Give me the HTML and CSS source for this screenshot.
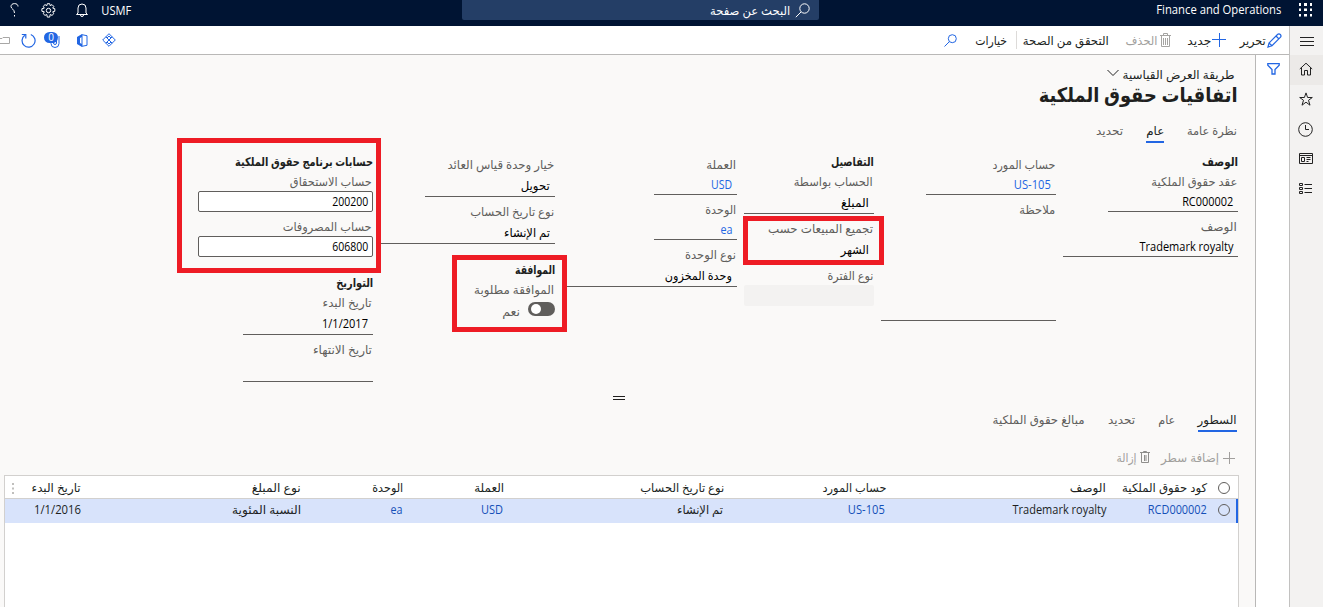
FILE: index.html
```
<!DOCTYPE html>
<html lang="ar" dir="rtl">
<head>
<meta charset="utf-8">
<title>Finance and Operations</title>
<link rel="stylesheet" href="styles.css">
</head>
<body>
<header class="top">
  <svg class="waffle" width="13" height="14" viewBox="0 0 13 14" fill="#fff"><path d="M0 0h2v3H0zM5 0h3v3H5zM11 0h2v3h-2zM0 5.500h2v2.500H0zM5 5.500h3v2.500H5zM11 5.500h2v2.500h-2zM0 11h2v2.500H0zM5 11h3v2.500H5zM11 11h2v2.500h-2z"/></svg>
  <span class="brand" data-w="125">Finance and Operations</span>
  <div class="search">
    <svg width="15" height="15" viewBox="0 0 15 15" fill="none" stroke="#fff"><circle cx="9.500" cy="5.500" r="4.700"/><path d="M6 9L.8 14.200"/></svg>
    <span data-w="80">البحث عن صفحة</span>
  </div>
  <div class="top-end">
    <span class="company" data-w="30">USMF</span>
    <svg class="bell" width="12" height="14" viewBox="0 0 12 14" fill="none" stroke="#fff"><path d="M2 10V5a4 4 0 0 1 8 0v5l1.500 1.500H.5zM4.500 12a1.500 1.500 0 0 0 3 0"/></svg>
    <svg class="gear" width="15" height="15" viewBox="0 0 15 15" fill="none" stroke="#fff"><circle cx="7.500" cy="7.500" r="2.200"/><path d="M6.300.7h2.400l.5 2 1.800-1.100 1.800 1.800-1.100 1.700 2.100.6v2.600l-2.100.5 1.100 1.900-1.800 1.700L9.200 11.500l-.5 2.600H6.300l-.5-2.600L4 12.400l-1.800-1.700 1.100-1.900L.9 8.300V5.700L3.300 5.100 2.200 3.400 4 1.600l1.800 1.100z"/></svg>
    <svg class="help" width="9" height="14" viewBox="0 0 9 14" fill="none" stroke="#fff"><path d="M8 3.500C8 1.500 6.500.6 4.500.6S1 1.600 1 3.500C1 6 4.500 6 4.500 10M4.500 12v1.500"/></svg>
  </div>
</header>

<div class="shell">
  <nav class="rail">
    <div class="rail-item menu"><svg width="14" height="10" viewBox="0 0 14 10" stroke="#222"><path d="M0 .5h14M0 4.500h14M0 8.500h14"/></svg></div>
    <div class="rail-item active"><svg width="14" height="14" viewBox="0 0 14 14" fill="none" stroke="#222"><path d="M.8 7L7 1.200 13.200 7M2.500 5.500v7.500h3V8.500h3V13h3V5.500"/></svg></div>
    <div class="rail-item"><svg width="14" height="14" viewBox="0 0 14 14" fill="none" stroke="#222"><path d="M7 .9l1.600 4.600h4.700L9.500 8.300l1.500 4.900-4-3-4 3 1.500-4.900L.7 5.500h4.700z"/></svg></div>
    <div class="rail-item"><svg width="15" height="15" viewBox="0 0 15 15" fill="none" stroke="#222"><circle cx="7.500" cy="7.500" r="6.800"/><path d="M7.500 3v4.500H11"/></svg></div>
    <div class="rail-item"><svg width="14" height="12" viewBox="0 0 14 12" fill="none" stroke="#222"><path d="M.5.5h13v10H.5zM.5 2.500h13M2.500 4.500h3v4h-3zM7.500 4.500h4M7.500 6.500h4M7.500 8.500h2"/></svg></div>
    <div class="rail-item"><svg width="14" height="12" viewBox="0 0 14 12" fill="none" stroke="#222"><path d="M.5.500h3v2h-3zM.5 4.500h3v2h-3zM.5 8.500h3v2h-3zM5.500 1.500H13M5.500 5.500H13M5.500 9.500H13"/></svg></div>
  </nav>

  <div class="work">
    <div class="toolbar">
      <svg class="i-edit" width="15" height="15" viewBox="0 0 15 15" fill="none" stroke="#2266e3" stroke-width="1.200"><path d="M1 14l1-4L10.500 1.500a1.600 1.600 0 0 1 2.800 2.800L5 12.700zM2 10l3 2.700M9 3l3 3"/></svg>
      <span data-w="26">تحرير</span>
      <svg class="i-new" width="14" height="14" viewBox="0 0 14 14" stroke="#2266e3" fill="none"><path d="M7.500 0v14M0 6.500h14"/></svg>
      <span data-w="24">جديد</span>
      <svg class="i-del" width="11" height="15" viewBox="0 0 11 15" fill="none" stroke="#a5a4a2"><path d="M0 2.500h11M3.500 2V.5h4V2M1.500 3v10.500h8V3M3.500 5v7M5.500 5v7M7.500 5v7"/></svg>
      <span class="off" data-w="32">الحذف</span>
      <span class="validate" data-w="86">التحقق من الصحة</span>
      <i class="bar"></i>
      <span class="options" data-w="32">خيارات</span>
      <svg class="i-find" width="13" height="13" viewBox="0 0 13 13" fill="none" stroke="#2266e3"><circle cx="8.300" cy="4.700" r="4"/><path d="M5.500 7.500L.5 12.500"/></svg>
      <div class="tools">
        <svg width="14" height="14" viewBox="0 0 14 14" fill="none" stroke="#2266e3"><path d="M7 .7L13.300 7 7 13.300.7 7zM7 3l2 2-2 2-2-2zM7 7l2 2-2 2-2-2zM3.800 3.800L7 7l3.200-3.200M3.800 10.200L5 9M10.200 10.200L9 9"/></svg>
        <svg width="11" height="13" viewBox="0 0 11 13"><path d="M5 .7l5 1v9.600l-5 1z" fill="none" stroke="#2266e3"/><path d="M0 3l5-3v3L3 4v5l2 1v3L0 10z" fill="#2266e3"/></svg>
        <div class="attach"><svg width="10" height="14" viewBox="0 0 10 14" fill="none" stroke="#2266e3"><path d="M1 5v4.500a4 4 0 0 0 8 0V2M3.500 3v6a1.500 1.500 0 0 0 3 0V2"/></svg><b>0</b></div>
        <svg width="15" height="15" viewBox="0 0 15 15" fill="none" stroke="#2266e3" stroke-width="1.200"><path d="M9.800 1.500a6.500 6.500 0 1 1-6 .8M.8 1.500h4v4"/></svg>
        <svg width="10" height="7" viewBox="0 0 10 7" fill="none" stroke="#a8a7a6"><path d="M0 1.500h2l1-1h6.500v6H0"/></svg>
      </div>
    </div>

    <div class="body">
      <aside class="filter"><svg width="13" height="12" viewBox="0 0 13 12" fill="none" stroke="#2266e3" stroke-width="1.300"><path d="M.8.700h11.400v1.500L8 6.500V11H5V6.500L.8 2.200z"/></svg></aside>
      <main class="main">
        <div class="view"><span data-w="112">طريقة العرض القياسية</span><svg width="12" height="8" viewBox="0 0 12 8" fill="none" stroke="#222"><path d="M.5 1L6 6.500 11.500 1"/></svg></div>
        <h1><span data-w="199">اتفاقيات حقوق الملكية</span></h1>
        <div class="tabs">
          <div class="tab"><span data-w="50">نظرة عامة</span></div>
          <div class="tab on"><span data-w="18">عام</span></div>
          <div class="tab"><span data-w="27">تحديد</span></div>
        </div>

        <section class="form">
          <div class="col">
            <h2><span data-w="36">الوصف</span></h2>
            <label><span data-w="86">عقد حقوق الملكية</span></label>
            <div class="val short"><span data-w="51">RC000002</span></div>
            <label><span data-w="36">الوصف</span></label>
            <div class="val"><span data-w="94">Trademark royalty</span></div>
          </div>
          <div class="col low">
            <label><span data-w="63">حساب المورد</span></label>
            <div class="val link short"><span data-w="37">US-105</span></div>
            <label><span data-w="36">ملاحظة</span></label>
            <div class="val memo"></div>
          </div>
          <div class="col narrow">
            <h2><span data-w="43">التفاصيل</span></h2>
            <label><span data-w="79">الحساب بواسطة</span></label>
            <div class="val combo"><span data-w="28">المبلغ</span></div>
            <label><span data-w="105">تجميع المبيعات حسب</span></label>
            <div class="val combo"><span data-w="28">الشهر</span></div>
            <label><span data-w="46">نوع الفترة</span></label>
            <div class="disabled"></div>
          </div>
          <div class="col low">
            <label><span data-w="30">العملة</span></label>
            <div class="val link tiny"><span data-w="21">USD</span></div>
            <label><span data-w="31">الوحدة</span></label>
            <div class="val link tiny"><span data-w="12">ea</span></div>
            <label><span data-w="51">نوع الوحدة</span></label>
            <div class="val combo"><span data-w="67">وحدة المخزون</span></div>
          </div>
          <div class="col low">
            <label><span data-w="107">خيار وحدة قياس العائد</span></label>
            <div class="val combo short"><span data-w="29">تحويل</span></div>
            <label><span data-w="84">نوع تاريخ الحساب</span></label>
            <div class="val combo"><span data-w="46">تم الإنشاء</span></div>
            <h2 class="gap-a"><span data-w="40">الموافقة</span></h2>
            <label><span data-w="80">الموافقة مطلوبة</span></label>
            <div class="switch"><i class="pill"></i><span data-w="18">نعم</span></div>
          </div>
          <div class="col">
            <h2><span data-w="138">حسابات برنامج حقوق الملكية</span></h2>
            <label><span data-w="82">حساب الاستحقاق</span></label>
            <div class="box"><span data-w="36">200200</span></div>
            <label><span data-w="89">حساب المصروفات</span></label>
            <div class="box"><span data-w="36">606800</span></div>
            <h2 class="gap-a"><span data-w="37">التواريخ</span></h2>
            <label><span data-w="49">تاريخ البدء</span></label>
            <div class="val combo short"><span data-w="46">1/1/2017</span></div>
            <label><span data-w="59">تاريخ الانتهاء</span></label>
            <div class="val combo short"></div>
          </div>
          <i class="mark mark-sales"></i>
          <i class="mark mark-approval"></i>
          <i class="mark mark-accounts"></i>
        </section>

        <div class="grip"><i></i></div>

        <div class="tabs lower">
          <div class="tab on"><span data-w="39">السطور</span></div>
          <div class="tab"><span data-w="17">عام</span></div>
          <div class="tab"><span data-w="27">تحديد</span></div>
          <div class="tab"><span data-w="92">مبالغ حقوق الملكية</span></div>
        </div>
        <div class="actions">
          <svg width="12" height="12" viewBox="0 0 12 12" stroke="#a19f9d"><path d="M6.500 0v12M0 6.500h12"/></svg>
          <span data-w="58">إضافة سطر</span>
          <svg class="i-remove" width="10" height="13" viewBox="0 0 10 13" fill="none" stroke="#8f8e8c"><path d="M0 1.500h10M3.500 1V.5h3V1M1.500 2v9.500h7V2M4.500 4v6M6 4v6"/></svg>
          <span data-w="20">إزالة</span>
        </div>
        <div class="grid">
          <div class="row head">
            <div class="c0"><i class="radio"></i></div>
            <div class="c1"><span data-w="85">كود حقوق الملكية</span></div>
            <div class="c2"><span data-w="36">الوصف</span></div>
            <div class="c3"><span data-w="64">حساب المورد</span></div>
            <div class="c4"><span data-w="84">نوع تاريخ الحساب</span></div>
            <div class="c5"><span data-w="30">العملة</span></div>
            <div class="c6"><span data-w="31">الوحدة</span></div>
            <div class="c7"><span data-w="49">نوع المبلغ</span></div>
            <div class="c8"><span data-w="49">تاريخ البدء</span></div>
            <svg class="dots" width="2" height="11" viewBox="0 0 2 11" fill="#c0bfbd"><path d="M0 0h2v2H0zM0 4.500h2v2H0zM0 9h2v2H0z"/></svg>
          </div>
          <div class="row sel">
            <div class="c0"><i class="radio"></i></div>
            <div class="c1 lk"><span data-w="59">RCD000002</span></div>
            <div class="c2"><span data-w="94">Trademark royalty</span></div>
            <div class="c3 lk"><span data-w="37">US-105</span></div>
            <div class="c4"><span data-w="46">تم الإنشاء</span></div>
            <div class="c5 lk"><span data-w="22">USD</span></div>
            <div class="c6 lk"><span data-w="12">ea</span></div>
            <div class="c7"><span data-w="69">النسبة المئوية</span></div>
            <div class="c8"><span data-w="47">1/1/2016</span></div>
          </div>
        </div>
      </main>
    </div>
  </div>
</div>
<script src="fit.js"></script>
</body>
</html>
```
FILE: styles.css
```
* { box-sizing: border-box; margin: 0; padding: 0; }
body {
  width: 1323px; height: 607px; overflow: hidden;
  font: 12px/20px "Open Sans", "DejaVu Sans", sans-serif;
  color: #201f1e; background: #faf9f8;
  display: flex; flex-direction: column;
}
svg { display: block; flex: none; }
span { white-space: nowrap; flex: none; }
[data-w] { display: inline-block; transform-origin: 100% 50%; }

.top { height: 26px; flex: none; background: #001433; color: #fff; display: flex; padding-right: 11px; position: relative; }
.waffle { margin-top: 3px; }
.brand { margin-right: 18px; }
.search { width: 357px; height: 20px; margin-right: 337px; background: #243e66; border-radius: 0 0 2px 2px; display: flex; padding: 0 9px; gap: 5px; line-height: 22px; }
.search svg { margin-top: 3px; }
.top-end { margin-right: auto; display: flex; padding-left: 10px; }
.company { margin-left: 13px; line-height: 22px; }
.bell { margin: 3px 0 0 20px; }
.gear { margin: 3px 0 0 22px; }
.help { margin-top: 3px; }

.shell { flex: 1; display: flex; min-height: 0; }
.rail { width: 34px; flex: none; background: #f3f2f1; border-left: 1px solid #c2c1c0; }
.rail-item { height: 30px; display: flex; align-items: center; justify-content: center; padding: 0 2px 2px 0; }
.rail-item.menu { height: 29px; padding: 3px 0 0; }
.rail-item.active { background: #eceae8; }
.work { flex: 1; display: flex; flex-direction: column; min-width: 0; }
.toolbar { height: 29px; flex: none; background: #fff; border-bottom: 1px solid #b9b8b7; display: flex; align-items: center; padding: 1px 7px 1px 0; }
.toolbar span { margin-top: 1px; }
.i-edit { margin-left: 1px; }
.i-new { margin: 0 14px 0 1px; }
.i-del { margin: 0 16px 0 3px; }
.off { color: #a19f9d; }
.validate { margin-right: 16px; }
.bar { width: 1px; height: 18px; background: #dddbd9; margin-right: 6px; }
.options { margin-right: 9px; }
.i-find { margin-right: 18px; }
.tools { margin-right: auto; display: flex; align-items: center; }
.tools > :nth-child(1) { margin-left: 14px; }
.tools > :nth-child(2) { margin-left: 17px; }
.tools > :nth-child(3) { margin-left: 8px; }
.tools > :nth-child(4) { margin-left: 11px; }
.attach { position: relative; width: 16px; height: 16px; padding-top: 2px; }
.attach b { position: absolute; left: 0; top: 0; width: 14px; height: 11px; border-radius: 6px; background: #2266e3; color: #fff; font: 10px/11px "Open Sans", sans-serif; text-align: center; }

.body { flex: 1; display: flex; min-height: 0; }
.filter { width: 34px; flex: none; background: #fff; border-left: 1px solid #b9b8b7; padding: 8px 9px 0 0; }
.main { flex: 1; min-width: 0; padding: 10px 17px 0 4px; display: flex; flex-direction: column; }
.view { height: 20px; display: flex; padding-right: 3px; gap: 4px; }
.view svg { margin-top: 4px; }
h1 { height: 20px; font-size: 20px; line-height: 20px; }
.tabs { display: flex; height: 22px; margin-top: 16px; gap: 23px; color: #605e5c; padding-right: 1px; }
.tab { height: 22px; border-bottom: 2px solid transparent; flex: none; }
.tab.on { color: #201f1e; border-color: #2266e3; }

.form { position: relative; height: 247px; flex: none; display: flex; gap: 7px; padding-top: 9px; color: #605e5c; }
.col { width: 175px; flex: none; display: flex; flex-direction: column; }
.col.narrow { width: 130px; }
.col.low { padding-top: 3px; }
h2 { height: 20px; font-size: 12px; line-height: 20px; color: #201f1e; flex: none; }
label { display: block; height: 20px; flex: none; padding-right: 1px; }
.val { height: 20px; flex: none; border-bottom: 1px solid #605e5c; color: #000; padding-right: 5px; margin-bottom: 5px; }
.val.short { width: 130px; }
.val.tiny { width: 83px; }
.val.combo { height: 22px; line-height: 22px; }
.val.memo { height: 101px; }
.val.link { color: #2266e3; }
.disabled { height: 21px; margin-top: -1px; background: #f3f2f1; border-radius: 2px; }
.gap-a { margin-top: 11px; }
.box { height: 21px; margin: -1px 0 5px; background: #fff; border: 1px solid #605e5c; border-radius: 2px; color: #000; padding-right: 4px; line-height: 20px; }
.switch { display: flex; gap: 8px; height: 20px; line-height: 24px; }
.pill { width: 27px; height: 14px; margin-top: 2px; border-radius: 7px; background: #605e5c; padding: 2px 3px; display: flex; justify-content: flex-end; }
.pill::before { content: ""; width: 10px; height: 10px; border-radius: 50%; background: #fff; }
.mark { position: absolute; border: 5px solid #ee1c25; }
.mark-sales { left: 739px; top: 73px; width: 141px; height: 49px; }
.mark-approval { left: 448px; top: 112px; width: 115px; height: 77px; }
.mark-accounts { left: 173px; top: -5px; width: 204px; height: 135px; }

.grip { height: 14px; flex: none; display: flex; justify-content: center; padding-top: 6px; }
.grip i { width: 12px; height: 4px; border: solid #201f1e; border-width: 1px 0; margin-right: 4px; }
.tabs.lower { margin-top: 6px; flex: none; height: 22px; }
.actions { height: 20px; flex: none; margin-top: 16px; display: flex; align-items: center; padding: 0 3px 1px 0; gap: 4px; color: #a19f9d; }
.i-remove { margin-right: 7px; margin-left: -1px; }
.grid { flex: 1; margin: 7px -1px 0 0; background: #fff; border: 1px solid #d2d0ce; border-bottom: 0; }
.row { display: grid; grid-template-columns: 31px 101px 220px 162px 220px 101px 102px 220px 1fr; height: 24px; line-height: 22px; position: relative; }
.row.head { height: 23px; border-bottom: 1px solid #d2d0ce; line-height: 24px; }
.row.sel { background: #d8e3fb; border-right: 2px solid #2266e3; grid-template-columns: 29px 101px 221px 162px 220px 101px 101px 220px 1fr; }
.lk { color: #1450b8; }
.c0 { display: flex; align-items: center; padding-right: 8px; }
.sel .c0 { padding: 0 6px 2px 0; }
.radio { width: 12px; height: 12px; border: 1px solid #605e5c; border-radius: 50%; }
.dots { position: absolute; left: 7px; top: 7px; }
```
FILE: fit.js
```
document.querySelectorAll('[data-w]').forEach(function (el) {
  var natural = el.getBoundingClientRect().width;
  var wanted = Number(el.dataset.w);
  el.style.transform = 'scaleX(' + wanted / natural + ')';
  el.style.marginLeft = (parseFloat(getComputedStyle(el).marginLeft) + wanted - natural) + 'px';
});
```
